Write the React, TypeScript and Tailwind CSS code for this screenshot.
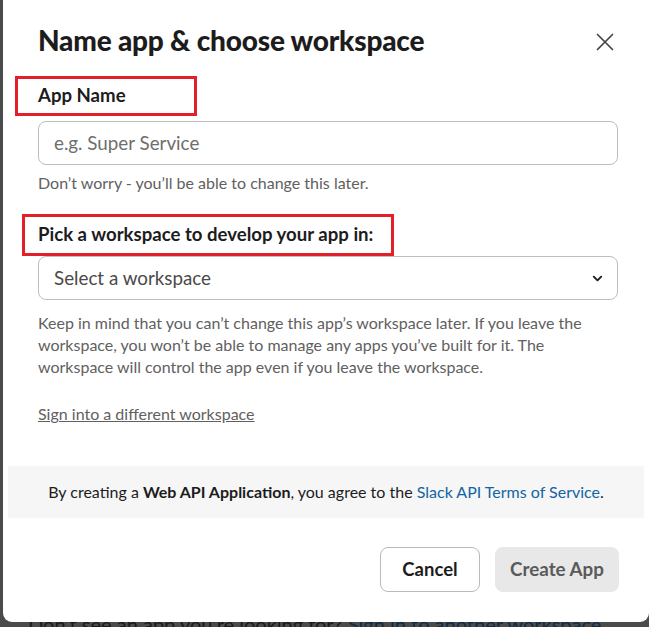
import { ChevronDown } from "lucide-react";

const font = "font-['Lato','Liberation_Sans',sans-serif]";

function CloseIcon() {
  return (
    <svg width="18" height="18" viewBox="0 0 18 18" fill="none" stroke="#454545" strokeWidth="1.7" strokeLinecap="round">
      <path d="M1.5 1.5l15 15M16.5 1.5l-15 15" />
    </svg>
  );
}

export default function App() {
  return (
    <div className={`${font} relative h-[627px] w-[649px] overflow-hidden bg-[#4b4b4b]`}>
      {/* page behind the overlay */}
      <div className="absolute left-[28px] top-[610px] whitespace-nowrap text-[20px] leading-[28px] text-[#1a1a1a]">
        Don’t see an app you’re looking for?{" "}
        <span className="text-[#0f2c45]">Sign in to another workspace</span>
      </div>

      <div className="absolute left-[3px] top-0 z-10 flex h-[622px] w-[646px] flex-col rounded-b-[9px] bg-white">
        <div className="flex flex-col pl-[35px] pr-[31px]">
          <div className="flex items-start justify-between pt-[22px]">
            <h1 className="text-[28px] font-black leading-[36px] tracking-[-0.2px] text-[#1d1c1d]">
              Name app &amp; choose workspace
            </h1>
            <button className="mr-[-5px] flex h-[36px] w-[36px] items-center justify-center pt-[4px]">
              <CloseIcon />
            </button>
          </div>

          <div className="ml-[-23px] mt-[18px] flex h-[40px] w-[182px] items-center border-[3px] border-[#e3202a] pl-[20px]">
            <span className="text-[18.6px] font-bold text-[#1d1c1d]">App Name</span>
          </div>
          <div className="mt-[5px] flex h-[44px] items-center rounded-[8px] border border-[#bdbdbd] px-[15px] text-[18.8px] text-[#6e6e6e]">
            e.g. Super Service
          </div>
          <p className="mt-[7px] text-[16px] leading-[22px] text-[#616061]">
            Don’t worry - you’ll be able to change this later.
          </p>

          <div className="ml-[-16px] mt-[20px] flex h-[42px] w-[372px] items-center border-[3px] border-[#e3202a] pl-[13px]">
            <span className="text-[18.6px] font-bold text-[#1d1c1d]">
              Pick a workspace to develop your app in:
            </span>
          </div>
          <div className="flex h-[44px] items-center justify-between rounded-[8px] border border-[#bdbdbd] pl-[15px] pr-[12px] text-[18.8px] text-[#4a4a4a]">
            <span>Select a workspace</span>
            <ChevronDown size={15} strokeWidth={3} color="#1d1c1d" />
          </div>
          <p className="mt-[12px] text-[16px] leading-[22px] text-[#616061]">
            Keep in mind that you can’t change this app’s workspace later. If you leave the
            workspace, you won’t be able to manage any apps you’ve built for it. The
            workspace will control the app even if you leave the workspace.
          </p>
          <a className="mt-[25px] self-start text-[16px] leading-[22px] text-[#616061] underline">
            Sign into a different workspace
          </a>
        </div>

        <div className="mx-[5px] mt-[41px] flex h-[52px] items-center justify-center bg-[#f6f6f6] text-[16px] text-[#1d1c1d]">
          <span>
            By creating a <b className="font-bold">Web API Application</b>, you agree to the{" "}
            <a className="text-[#1264a3]">Slack API Terms of Service</a>.
          </span>
        </div>

        <div className="mt-[29px] flex justify-end gap-[15px] pr-[30px]">
          <button className="h-[45px] w-[100px] rounded-[8px] border border-[#bbbbbb] bg-white text-[18.5px] font-bold text-[#1d1c1d]">
            Cancel
          </button>
          <button className="h-[45px] w-[124px] rounded-[8px] bg-[#e8e8e8] text-[18.8px] font-bold text-[#5a5a5a]">
            Create App
          </button>
        </div>
      </div>
    </div>
  );
}
